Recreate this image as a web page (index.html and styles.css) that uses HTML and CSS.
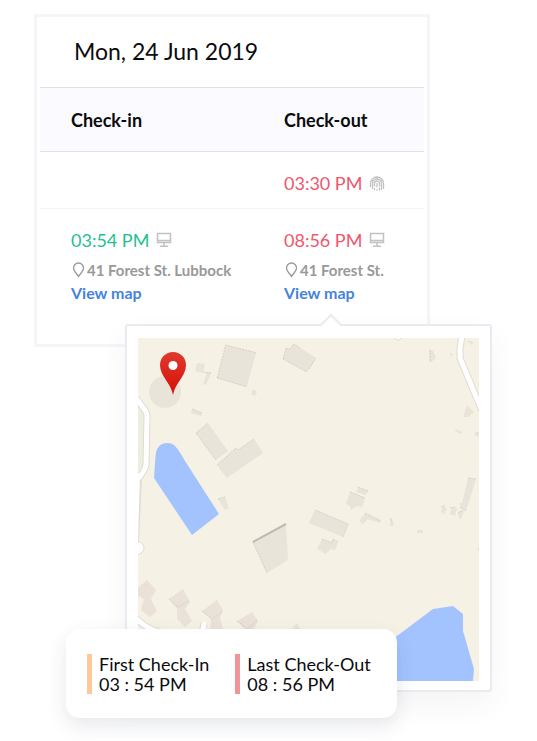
FILE: index.html
```html
<!DOCTYPE html>
<html lang="en">
<head>
<meta charset="utf-8">
<meta name="viewport" content="width=device-width, initial-scale=1">
<title>Attendance</title>
<link rel="stylesheet" href="styles.css">
</head>
<body>
<svg class="sprite" aria-hidden="true">
  <symbol id="monitor" viewBox="0 0 16 16">
    <path d="M1.500 1.500h13v9h-13zM8 10.500v4M4 14.300h8M2 8.500h12" fill="none" stroke="currentColor" stroke-width="1.500"/>
  </symbol>
  <symbol id="pin" viewBox="0 0 14 16">
    <path d="M7 14.500C5.500 12 2 9 2 6a5 5 0 0 1 10 0c0 3-3.500 6-5 8.500z" fill="none" stroke="currentColor" stroke-width="1.300"/>
  </symbol>
  <symbol id="fingerprint" viewBox="0 0 16 16">
    <path d="M1.500 12V8.500a6.500 6.500 0 0 1 13 0V14M3.500 14V8.500a4.500 4.500 0 0 1 9 0V15M5.500 11.500v-3a2.500 2.500 0 0 1 5 0v3M5.500 13v2M8 8v4.500M8 14v1.500M10.500 12.500v3M2 5l2 1M8 2v2M12 5.500l2-1" fill="none" stroke="currentColor" stroke-width="1.300"/>
  </symbol>
</svg>
<main class="page">
  <section class="card">
    <h1 class="title">Mon, 24 Jun 2019</h1>
    <table class="log">
      <thead>
        <tr><th scope="col">Check-in</th><th class="col-out" scope="col">Check-out</th></tr>
      </thead>
      <tbody>
        <tr class="row-short">
          <td></td>
          <td><div class="time out">03:30 PM <svg class="icon"><use href="#fingerprint"/></svg></div></td>
        </tr>
        <tr class="row-tall">
          <td>
            <div class="time in">03:54 PM <svg class="icon"><use href="#monitor"/></svg></div>
            <div class="place"><svg class="marker"><use href="#pin"/></svg>41 Forest St. Lubbock</div>
            <a class="link" href="#map">View map</a>
          </td>
          <td>
            <div class="time out">08:56 PM <svg class="icon"><use href="#monitor"/></svg></div>
            <div class="place"><svg class="marker"><use href="#pin"/></svg>41 Forest St.</div>
            <a class="link" href="#map">View map</a>
          </td>
        </tr>
      </tbody>
    </table>
  </section>

  <section class="popover" id="map">
    <svg class="caret" viewBox="0 0 24 12" aria-hidden="true"><path d="M1 12L12 1l11 11" fill="#fff" stroke="#ebeaf0" stroke-width="2"/></svg>
    <svg class="map" viewBox="138 337 341 343" role="img" aria-label="Map of the check-out location">
      <defs>
        <linearGradient id="red" x1="0" y1="0" x2="0" y2="1"><stop offset="0" stop-color="#e0392f"/><stop offset="1" stop-color="#d60f05"/></linearGradient>
      </defs>
      <path d="M138 337h341v343H138z" fill="#f5f1e4"/>
      <path d="M138 400l9 13-1 52-8 14z" fill="#edeedd"/>
      <g fill="#e8e4d9">
        <circle cx="165" cy="391" r="16"/>
        <path d="M197 362l8 1-2 9-8-2zM207 371l4 1-5 12-3-1zM253 388l4 3-2 4-4-2zM192 408l10 4-1 3-10-3zM208 422l20 28-12 9-20-27zM217 464l19-17 2 2 16-11 9 14-36 25zM218 498l7-2 4 11-4 2z"/>
        <path d="M253 541l33-18 2 36-21 13z"/>
        <path d="M429 350l4-1 3 8-6 5zM467 339l7 2-3 3zM450 352l3 1-1 2-2-1zM467 404l7 7-6 5h-5zM456 428l6 3-1 2-6-3zM475 431h4v5l-5-2zM358 486l10 4-2 4-10-3zM350 491l15 6-3 9-5-1-6 4-1-4-4-2zM315 509l33 14-5 13-34-14zM322 538l10 4 1-4 5 3-3 8-5-1-4 5-9-5zM365 512l16 8-1 2-12-4-5 5-4-3zM391 516l2 5 1 4h-4zM417 529h6v3h-6zM468 477l8 1-10 32-5-3zM443 504l4 4-3 5-3-2zM452 506l5 1-2 8-5-2zM459 510h5l-3 8-3-2zM477 548l2-2v4zM292 628l5-6 3 6z"/>
        <path d="M225.700 344l30.300 7.700-9.300 34-29.400-8.700zM294 343l22 14-7 11-2 3-24-13 3-11 4 1z"/>
      </g>
      <g fill="#eae2d8">
        <path d="M138 587l9-8 9 10-5 9 6 12-7 6-9-7 3-11-6-3zM169 598l14-10 7 13-5 7 7 12-7 6-8-8v-10zM202 610l15-11 6 10-3 8 4 14h-14l1-13zM237 620l15-9 6 9-5 10h-7z"/>
      </g>
      <g fill="none" stroke="#d6d1c6" stroke-width="1" stroke-dasharray="2 1">
        <path d="M217.300 377l8.400-33 30.300 7.700M217.300 377l29.400 8.700M283 358l24 13M309 368l7-11M283 358l3-11 4 1 4-5 6 4M196 432l12-10M217 464l19-17 2 2 16-11M216 459l-20-27M253 541l14 31M350 491l15 6M358 486l10 4M315 509l33 14-5 13M322 538l10 4 1-4 5 3M365 512l16 8M468 477l8 1M461 502v5l5 3M203 371l8 1M192 408l10 4M218 498l7-2M169 598l9 8 11-6M202 610l10 8 11-8M237 620l11 8 9-9M390 517l2 4M441 506l4-2M450 507l5-1M458 512l5-3M430 349v12"/>
      </g>
      <path d="M253 541l33-18" stroke="#bfbab0" stroke-width="2"/>
      <path d="M154 477l1.500-22c1-10 6-13 11.500-13 4 0 6 1 8 3 4 4 7 10 10 15l34 53-27 21z" fill="#a3c3ff"/>
      <path d="M388 643l9-8 36-27 20-3 10 8v17l11 38-1 12h-85z" fill="#a3c3ff"/>
      <g fill="none" stroke="#dfdcd6" stroke-width="7">
        <path d="M136 397l9 12q2 3 2 6l-1 48q0 6-9 16"/>
        <path d="M462 334l-2 14v9l22 53M136 617q10 11 26 15M204 622l-2 10"/>
      </g>
      <path d="M141 476l-3 64" stroke="#dfdcd6" stroke-width="2"/>
      <circle cx="138" cy="547" r="6" fill="#fff" stroke="#dfdcd6"/>
      <path d="M138 472l2 1-2 67z" fill="#fff"/>
      <g fill="none" stroke="#fff" stroke-width="5" stroke-linecap="round">
        <path d="M136 397l9 12q2 3 2 6l-1 48q0 6-9 16"/>
        <path d="M462 334l-2 14v9l22 53M136 617q10 11 26 15M204 623l-2 10"/>
      </g>
      <circle cx="398" cy="336" r="3" fill="#fff" stroke="#dfdcd6"/>
      <path d="M173 394c-2-12-13-19-13-30a13 13 0 0 1 26 0c0 11-11 18-13 30z" fill="url(#red)"/>
      <circle cx="173" cy="364.500" r="4.500" fill="#fff"/>
    </svg>
  </section>

  <section class="summary">
    <div class="stat first">First Check-In<br>03 : 54 PM</div>
    <div class="stat last">Last Check-Out<br>08 : 56 PM</div>
  </section>
</main>
</body>
</html>
```

FILE: styles.css
```css
* { box-sizing: border-box; }

body {
  margin: 0;
  background: #fff;
  color: #0b0b0e;
  font-family: Lato, "Liberation Sans", sans-serif;
}

.sprite { position: absolute; width: 0; height: 0; }

.page { padding: 14px 0 24px; }

.card {
  margin: 0 107px 0 34px;
  padding: 0 3px 40px;
  border: 3px solid #f5f5f8;
}

.title {
  margin: 0;
  padding: 18px 34px 20px;
  font-size: 23px;
  font-weight: 400;
  line-height: 32px;
}

.log {
  width: 100%;
  border-collapse: collapse;
  table-layout: fixed;
}

.col-out { width: 171px; }

th, td {
  padding: 0 0 0 31px;
  text-align: left;
  vertical-align: top;
}

th {
  height: 64px;
  border-top: 1px solid #e0e0e7;
  border-bottom: 1px solid #e0e0e7;
  background: #fbfbff;
  font-size: 18px;
  font-weight: 700;
  vertical-align: middle;
}

.row-short td {
  height: 57px;
  padding-top: 19px;
  border-bottom: 1px solid #f4f4f7;
}

.row-tall td { padding-top: 19px; }

.time {
  display: flex;
  align-items: center;
  gap: 7px;
  font-size: 18px;
  line-height: 24px;
}

.in { color: #1fbf92; }
.out { color: #f0566c; }

.icon {
  width: 16px;
  height: 16px;
  color: #c2c2c4;
}

.place {
  display: flex;
  align-items: center;
  gap: 1px;
  padding-top: 6px;
  color: #999;
  font-size: 15px;
  font-weight: 700;
  line-height: 24px;
  white-space: nowrap;
}

.marker { width: 15px; height: 16px; }

.link {
  display: block;
  color: #4484dc;
  font-size: 16px;
  font-weight: 700;
  line-height: 22px;
  text-decoration: none;
}

.popover {
  position: relative;
  margin: -23px 45px 0 125px;
  padding: 12px 11px 9px;
  border: 2px solid #ebeaf0;
  border-radius: 3px;
  background: #fff;
  box-shadow: 0 12px 28px rgba(60, 60, 80, 0.06);
}

.caret {
  position: absolute;
  top: -12px;
  left: 53%;
  width: 24px;
  height: 12px;
}

.map { display: block; width: 100%; height: auto; }

.summary {
  position: relative;
  display: flex;
  gap: 26px;
  margin: -63px 140px 0 66px;
  padding: 25px 21px 24px;
  border-radius: 14px;
  background: #fff;
  box-shadow: 0 8px 20px rgba(40, 50, 70, 0.11);
}

.stat {
  padding-left: 7px;
  border-left: 5px solid #ffc899;
  font-size: 18px;
  line-height: 20px;
  white-space: nowrap;
}

.last { border-left-color: #f09499; }
```
